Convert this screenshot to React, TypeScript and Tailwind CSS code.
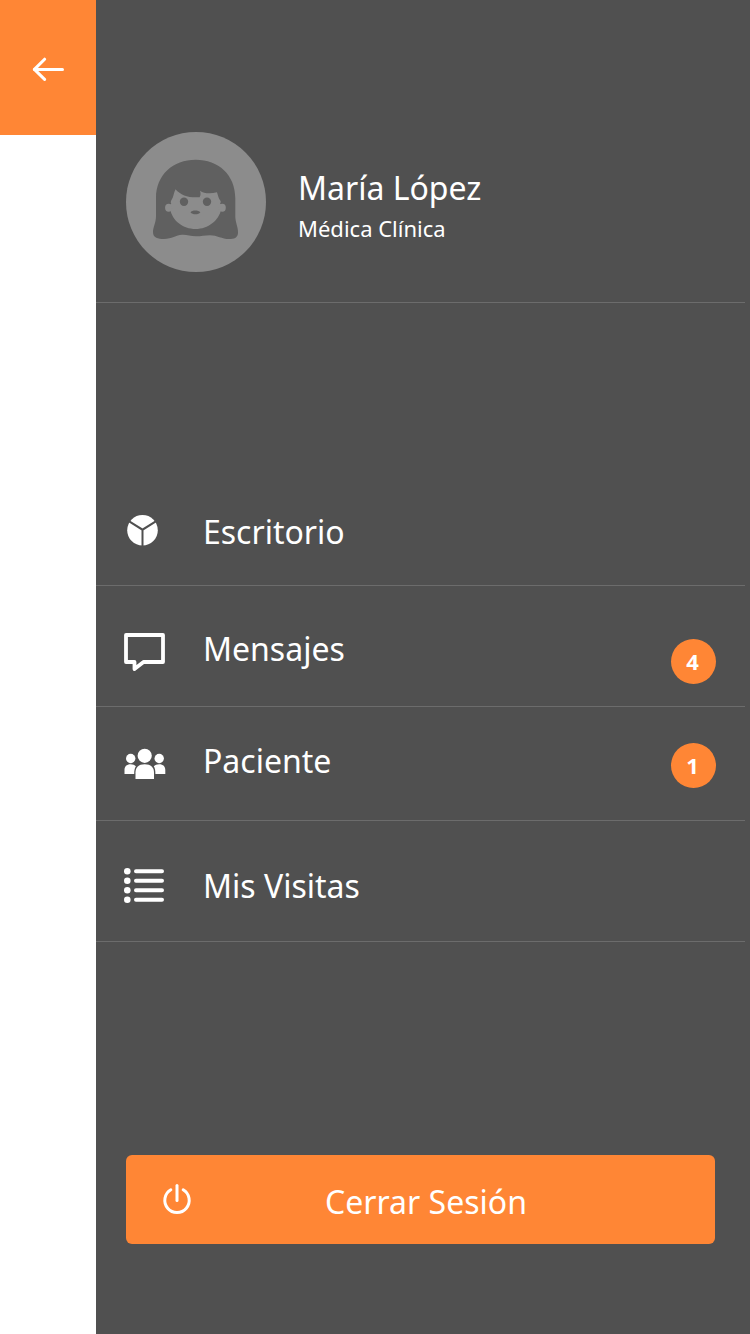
import type { ReactNode } from "react";

function ArrowLeftIcon() {
  return (
    <svg aria-hidden="true" viewBox="0 0 32 24" className="h-6 w-8" fill="none" stroke="#fff" strokeWidth="3">
      <path d="M2.5 12.4H30.5" strokeLinecap="round" />
      <path d="M12.6 2.2L2.4 12.4L12.6 22.4" strokeLinecap="round" strokeLinejoin="round" />
    </svg>
  );
}

function Avatar() {
  return (
    <svg role="img" aria-label="María López" viewBox="0 0 140 140" className="h-[140px] w-[140px] shrink-0">
      <circle cx="70" cy="70" r="70" fill="#8c8c8c" />
      <path
        fill="#606060"
        d="M30 66C30 43 47 27.8 69.7 27.8C92.500 27.800 109.300 43 109.300 66V84C109.300 91 112.300 95 112 101C111.700 106 108 107 103 107C96 107 91 103.200 84 103.200C79 103.200 75 104.300 70 104.300C64 104.300 61 102.500 56 102.800C50 103.200 46 107 38 107C32 107 27 106 27 100C27 95 30 91 30 84Z"
      />
      <g fill="#8c8c8c">
        <path d="M49.500 57.200C55 63.500 63 66 73.600 65.200C74.800 63 74.800 61 74 58.700C78 61.500 84 62 91 60.300C92 64 92.800 66.800 94.600 69C95 70.200 94.400 71 94 71.800C95.500 72 96 75 95.300 77C93 88.500 82 97 69.700 97C57 97 46 88.500 44.200 77C43.500 74.500 44 72.500 45.300 71.800C44.600 71 44.600 69.800 45.200 68.600C47.800 64.500 47.600 61 49.500 57.200Z" />
        <ellipse cx="42.600" cy="75.800" rx="3.500" ry="4" />
        <ellipse cx="96.300" cy="75.800" rx="3.500" ry="4" />
      </g>
      <g fill="#606060">
        <circle cx="58" cy="69.700" r="4.200" />
        <circle cx="81" cy="69.700" r="4.200" />
        <path d="M64.500 80.300C66 77.800 72.500 77.800 74.300 80.300C72.500 83 66.500 83 64.500 80.300Z" />
      </g>
    </svg>
  );
}

function MenuIcon({ children }: { children: ReactNode }) {
  return (
    <svg aria-hidden="true" viewBox="0 0 42 48" className="h-12 w-[42px] shrink-0" fill="#fff">
      {children}
    </svg>
  );
}

function PowerIcon() {
  return (
    <svg aria-hidden="true" viewBox="0 0 30 32" className="h-8 w-[30px] shrink-0" fill="none" stroke="#fff" strokeWidth="3" strokeLinecap="round">
      <path d="M15 1.500V16.500" />
      <path d="M8.800 5.800A12.200 12.200 0 1 0 21.200 5.800" />
    </svg>
  );
}

type Item = { label: string; row: string; badge?: { count: number; place: string }; icon: ReactNode };

const items: Item[] = [
  {
    label: "Escritorio",
    row: "h-[120px] pt-[42px]",
    icon: (
      <>
        <circle cx="18.500" cy="22.200" r="15.300" />
        <path d="M18.500 38V21.700M4 12.700L18.500 21.700L33 12.700" fill="none" stroke="#505050" strokeWidth="2" />
      </>
    ),
  },
  {
    label: "Mensajes",
    row: "h-[121px] pt-[39px]",
    badge: { count: 4, place: "mt-[14px]" },
    icon: (
      <path d="M2 10H39V37H19.500L10.500 44V37H2Z" fill="none" stroke="#fff" strokeWidth="3.800" strokeLinejoin="round" />
    ),
  },
  {
    label: "Paciente",
    row: "h-[114px] pt-[30px]",
    badge: { count: 1, place: "mt-[6px]" },
    icon: (
      <>
        <circle cx="20.700" cy="18.800" r="7.100" />
        <circle cx="6.700" cy="21.500" r="4.700" />
        <circle cx="35.200" cy="21.500" r="4.700" />
        <path d="M11.500 42V35.500C11.500 30.500 14.500 27.300 20.700 27.300S30 30.500 30 35.500V42Z" />
        <path d="M.5 37V33C.5 29.500 2.500 27.200 6.700 27.200C9 27.200 10.700 27.900 11.900 29.200C10.700 31 10.200 33.500 10.200 37Z" />
        <path d="M41.300 37V33C41.300 29.500 39.300 27.200 35.200 27.200C32.800 27.200 31 27.900 29.800 29.200C31 31 31.400 33.500 31.400 37Z" />
      </>
    ),
  },
  {
    label: "Mis Visitas",
    row: "h-[121px] pt-[41px]",
    icon: (
      <>
        <circle cx="3.300" cy="9.200" r="3.300" />
        <circle cx="3.300" cy="18.800" r="3.300" />
        <circle cx="3.300" cy="28.200" r="3.300" />
        <circle cx="3.300" cy="37.800" r="3.300" />
        <path d="M12 9.200H38M12 18.800H38M12 28.200H38M12 37.800H38" stroke="#fff" strokeWidth="4" strokeLinecap="round" />
      </>
    ),
  },
];

export default function App() {
  return (
    <div className="flex min-h-screen bg-white font-['Noto_Sans',sans-serif] text-white">
      <div className="w-24 shrink-0">
        <button type="button" aria-label="Volver" className="flex h-[135px] w-full items-center justify-center bg-[#ff8635] pt-[3px]">
          <ArrowLeftIcon />
        </button>
      </div>
      <aside className="flex min-w-0 flex-1 flex-col bg-[#505050] pr-[5px]">
        <header className="flex items-center gap-8 border-b border-[#6c6c6c] pt-[132px] pb-[30px] pl-[30px]">
          <Avatar />
          <div className="pt-2">
            <h1 className="text-[32px] leading-[44px]">María López</h1>
            <p className="text-[22px] leading-[36px]">Médica Clínica</p>
          </div>
        </header>
        <nav className="mt-[163px]">
          <ul>
            {items.map((item) => (
              <li key={item.label}>
                <a href="#" className={`flex items-start border-b border-[#6c6c6c] pr-[29px] pl-7 ${item.row}`}>
                  <MenuIcon>{item.icon}</MenuIcon>
                  <span className="ml-[37px] text-[32px] leading-[48px]">{item.label}</span>
                  {item.badge && (
                    <span className={`ml-auto flex h-[45px] w-[45px] items-center justify-center rounded-full bg-[#ff8635] pr-0.5 pb-0.5 text-[22px] leading-none font-bold ${item.badge.place}`}>
                      {item.badge.count}
                    </span>
                  )}
                </a>
              </li>
            ))}
          </ul>
        </nav>
        <button type="button" className="mt-auto mr-[30px] mb-[90px] ml-[30px] flex h-[89px] items-center rounded-md bg-[#ff8635] pr-[55px] pl-9">
          <PowerIcon />
          <span className="flex-1 pt-1 text-center text-[32px] leading-[48px]">Cerrar Sesión</span>
        </button>
      </aside>
    </div>
  );
}
